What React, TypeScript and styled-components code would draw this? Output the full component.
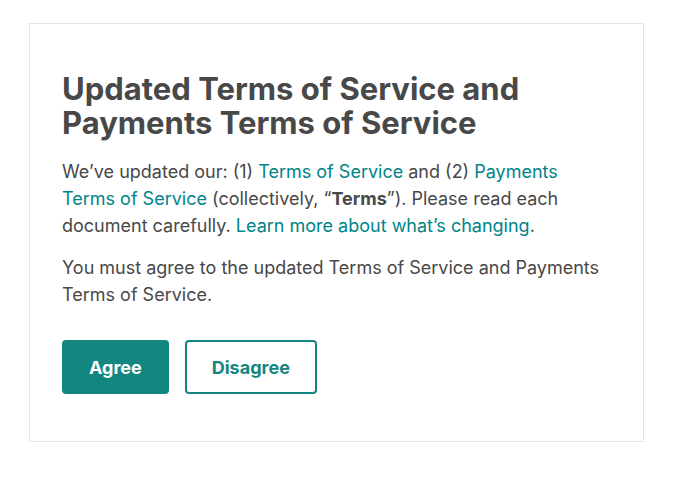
import React from "react";
import styled, { createGlobalStyle } from "styled-components";

const GlobalStyle = createGlobalStyle`
  body {
    margin: 0;
    background: #fff;
    font-family: Inter, "Noto Sans", sans-serif;
    color: #484848;
  }
`;

const Page = styled.div`
  padding: 23px 0 0 29px;
`;

const Card = styled.div`
  width: 615px;
  height: 419px;
  box-sizing: border-box;
  border: 1px solid #e4e4e4;
  padding: 48px 32px 0 32px;
`;

const Title = styled.h1`
  margin: 0 0 18px;
  font-size: 31px;
  line-height: 34px;
  font-weight: 700;
  color: #484848;
`;

const Para = styled.p`
  margin: 0 0 15px;
  font-size: 18px;
  line-height: 27px;
  font-weight: 400;
`;

const Link = styled.a`
  color: #008489;
  text-decoration: none;
`;

const Strong = styled.strong`
  font-weight: 700;
`;

const Actions = styled.div`
  display: flex;
  gap: 16px;
  margin-top: 32px;
`;

const Button = styled.button<{ $primary?: boolean }>`
  height: 54px;
  padding: 0 25px;
  border-radius: 4px;
  border: 2px solid #148680;
  background: ${(p) => (p.$primary ? "#148680" : "#fff")};
  color: ${(p) => (p.$primary ? "#fff" : "#148680")};
  font-family: inherit;
  font-size: 18px;
  font-weight: 700;
  cursor: pointer;
`;

export default function App() {
  return (
    <Page>
      <GlobalStyle />
      <Card>
        <Title>
          Updated Terms of Service and Payments Terms of Service
        </Title>
        <Para>
          We’ve updated our: (1) <Link href="#">Terms of Service</Link> and (2){" "}
          <Link href="#">Payments Terms of Service</Link> (collectively, “
          <Strong>Terms</Strong>”). Please read each document carefully.{" "}
          <Link href="#">Learn more about what’s changing</Link>.
        </Para>
        <Para>
          You must agree to the updated Terms of Service and Payments Terms of
          Service.
        </Para>
        <Actions>
          <Button $primary>Agree</Button>
          <Button>Disagree</Button>
        </Actions>
      </Card>
    </Page>
  );
}
